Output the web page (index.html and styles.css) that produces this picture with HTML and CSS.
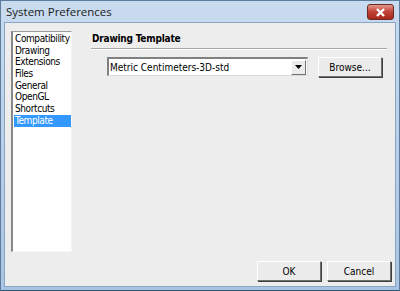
FILE: index.html
```html
<!DOCTYPE html>
<html lang="en">
<head>
    <meta charset="UTF-8">
    <title>System Preferences</title>
    <link rel="stylesheet" href="styles.css">
</head>
<body>
    <div class="window">
        <div class="titlebar">
            <span class="title">System Preferences</span>
            <button class="close" aria-label="Close">
                <svg width="11" height="9" viewBox="0 0 11 9"><path d="M2 1 L9 8 M9 1 L2 8" stroke="#fff" stroke-width="2.4"/></svg>
            </button>
        </div>
        <div class="client">
            <div class="main">
                <ul class="categories">
                    <li>Compatibility</li>
                    <li>Drawing</li>
                    <li>Extensions</li>
                    <li>Files</li>
                    <li>General</li>
                    <li>OpenGL</li>
                    <li>Shortcuts</li>
                    <li class="selected">Template</li>
                </ul>
                <div class="panel">
                    <h2>Drawing Template</h2>
                    <div class="row">
                        <div class="combo">
                            <span class="combo-text">Metric Centimeters-3D-std</span>
                            <span class="combo-arrow">
                                <svg width="7" height="4" viewBox="0 0 7 4"><path d="M0 0 H7 L3.5 4 Z" fill="#000"/></svg>
                            </span>
                        </div>
                        <button class="btn browse">Browse...</button>
                    </div>
                </div>
            </div>
            <div class="footer">
                <button class="btn">OK</button>
                <button class="btn">Cancel</button>
            </div>
        </div>
    </div>
</body>
</html>
```

FILE: styles.css
```css
/* Classic dialog look */
* { box-sizing: border-box; }
body { margin: 0; font-family: "DejaVu Sans Condensed", "DejaVu Sans", sans-serif; font-size: 10px; color: #000; }
.window {
    width: 400px;
    height: 291px;
    display: flex;
    flex-direction: column;
    background: linear-gradient(#c9dbef, #a9c4e4);
    border: 1px solid #5e7d9c;
    border-bottom-color: #2a5670;
}
.titlebar { height: 21px; display: flex; align-items: center; justify-content: space-between; padding: 0 5px 0 5px; }
.title { font-family: "Open Sans", sans-serif; font-size: 11.5px; color: #1a1a1a; }
.close {
    width: 27px; height: 16px; margin-top: 1px; padding: 0; border: 1px solid #6c2a24; border-radius: 3px;
    background: linear-gradient(#e59a8c, #c3463a 45%, #a92619);
    display: flex; align-items: center; justify-content: center;
}
.client {
    flex: 1;
    margin: 0 3px 3px 3px;
    background: #ededed;
    border: 1px solid #8aa4c2;
    display: flex;
    flex-direction: column;
}
.main { flex: 1; display: flex; padding: 8px 0 0 6px; }
.categories {
    list-style: none;
    margin: 0;
    padding: 1px 0 0 1px;
    width: 61px;
    height: 221px;
    background: #fff;
    border-top: 1px solid #9a9a9a;
    border-left: 2px solid #888;
    border-right: 1px solid #f6f6f6;
    border-bottom: 1px solid #f6f6f6;
}
.categories li { height: 11.7px; line-height: 11.7px; padding-left: 1px; white-space: nowrap; letter-spacing: -0.4px; }
.categories li.selected { background: #3399ff; color: #fff; }
.panel { flex: 1; padding: 1px 8px 0 19px; }
.panel h2 { margin: 0; font-size: 10px; line-height: 13px; font-weight: bold; letter-spacing: -0.2px; padding: 0 0 3px 1px; border-bottom: 1px solid #a8a8a8; box-shadow: 0 1px 0 #fff; }
.row { display: flex; align-items: flex-start; padding: 8px 0 0 16px; }
.combo {
    width: 201px; height: 19px; display: flex; align-items: center; justify-content: space-between;
    background: #fff;
    border-top: 2px solid #808080; border-left: 2px solid #808080;
    border-right: 1px solid #dcdcdc; border-bottom: 1px solid #dcdcdc;
}
.combo-text { padding-left: 1px; }
.combo-arrow {
    width: 15px; height: 15px; margin-right: 1px; display: flex; align-items: center; justify-content: center;
    background: #ececec; border: 1px solid; border-color: #fff #707070 #707070 #fff;
}
.btn {
    width: 64px; height: 20px; padding: 0;
    font-family: inherit; font-size: 10px; color: #000;
    background: #ececec;
    border: 1px solid; border-color: #fff #6e6e6e #6e6e6e #fff;
    box-shadow: 1px 1px 0 #404040;
}
.browse { margin-left: 10px; }
.footer { display: flex; justify-content: flex-end; gap: 6px; padding: 0 4px 5px 0; }
```
